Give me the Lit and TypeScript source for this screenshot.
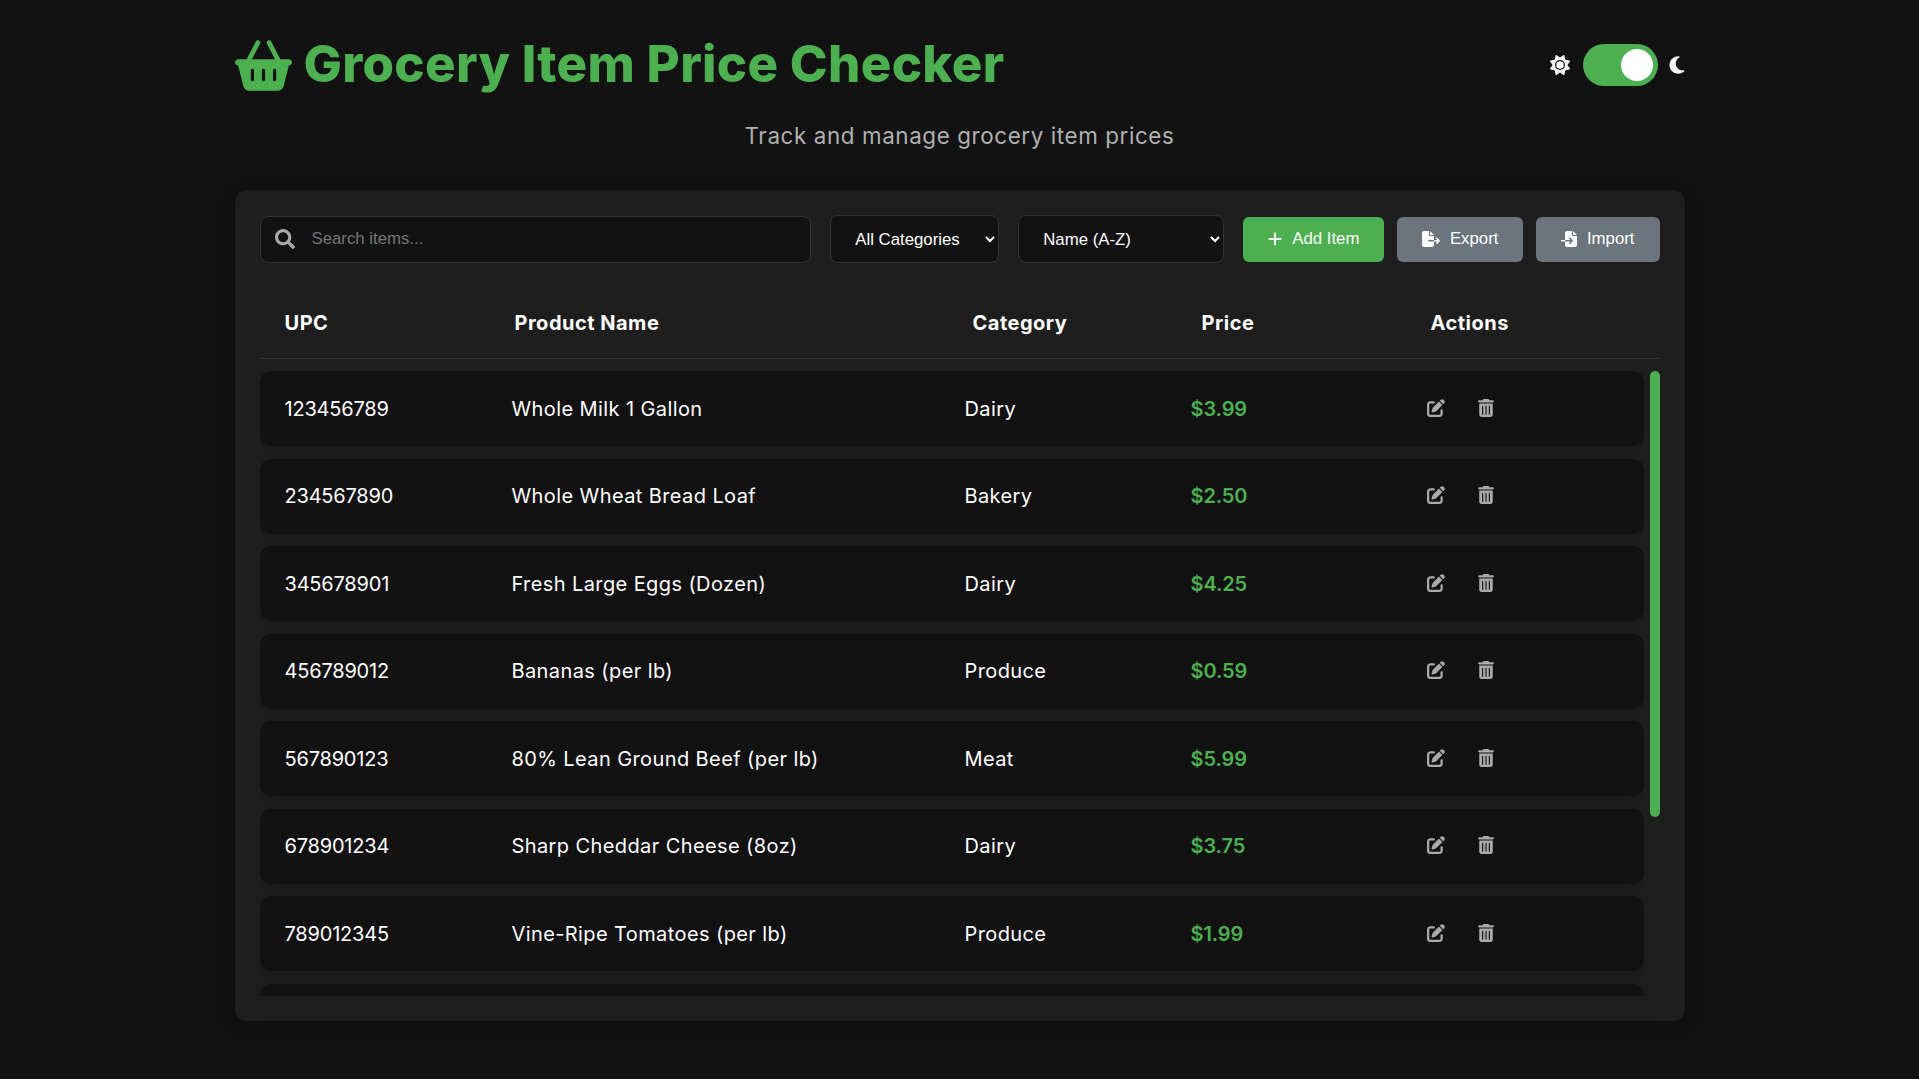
import { LitElement, html, css, svg } from "lit";
import { customElement } from "lit/decorators.js";

const icon = (vb: string, d: string, cls: string) =>
  html`<svg class=${cls} viewBox=${vb} fill="currentColor" aria-hidden="true">${svg`<path d=${d}></path>`}</svg>`;

const P = {
  basket: "M253.3 35.1c6.1-11.8 1.5-26.3-10.2-32.4s-26.3-1.5-32.4 10.2L117.6 192H32c-17.7 0-32 14.3-32 32s14.3 32 32 32L83.9 463.5C91 492 116.6 512 146 512H430c29.4 0 55-20 62.1-48.5L544 256c17.7 0 32-14.3 32-32s-14.3-32-32-32H458.4L365.3 12.9C359.2 1.2 344.7-3.4 332.9 2.7s-16.3 20.6-10.2 32.4L404.3 192H171.7L253.3 35.1zM192 304v96c0 8.8-7.2 16-16 16s-16-7.2-16-16V304c0-8.8 7.2-16 16-16s16 7.2 16 16zm96-16c8.8 0 16 7.2 16 16v96c0 8.8-7.2 16-16 16s-16-7.2-16-16V304c0-8.8 7.2-16 16-16zm128 16v96c0 8.8-7.2 16-16 16s-16-7.2-16-16V304c0-8.8 7.2-16 16-16s16 7.2 16 16z",
  sun: "M361.5 1.2c5 2.1 8.6 6.6 9.6 11.9L391 121l107.9 19.8c5.3 1 9.8 4.6 11.9 9.6s1.5 10.7-1.6 15.2L446.9 256l62.3 90.3c3.1 4.5 3.7 10.2 1.6 15.2s-6.6 8.6-11.9 9.6L391 391 371.1 498.9c-1 5.3-4.6 9.8-9.6 11.9s-10.7 1.5-15.2-1.6L256 446.9l-90.3 62.3c-4.5 3.1-10.2 3.7-15.2 1.6s-8.6-6.6-9.6-11.9L121 391 13.1 371.1c-5.3-1-9.8-4.6-11.9-9.6s-1.5-10.7 1.6-15.2L65.1 256 2.8 165.7c-3.1-4.5-3.7-10.2-1.6-15.2s6.6-8.6 11.9-9.6L121 121 140.9 13.1c1-5.3 4.6-9.8 9.6-11.9s10.7-1.5 15.2 1.6L256 65.1 346.3 2.8c4.5-3.1 10.2-3.7 15.2-1.6zM160 256a96 96 0 1 1 192 0 96 96 0 1 1 -192 0zm224 0a128 128 0 1 0 -256 0 128 128 0 1 0 256 0z",
  moon: "M223.5 32C100 32 0 132.3 0 256S100 480 223.5 480c60.6 0 115.5-24.2 155.8-63.4c5-4.9 6.3-12.5 3.1-18.7s-10.1-9.7-17-8.5c-9.8 1.7-19.8 2.6-30.1 2.6c-96.9 0-175.5-78.8-175.5-176c0-65.8 36-123.1 89.3-153.3c6.1-3.5 9.2-10.5 7.7-17.3s-7.3-11.9-14.3-12.5c-6.3-.5-12.6-.8-19-.8z",
  search: "M505 442.7L405.3 343c-4.5-4.5-10.6-7-17-7H372c27.6-35.3 44-79.7 44-128C416 93.1 322.9 0 208 0S0 93.1 0 208s93.1 208 208 208c48.3 0 92.7-16.4 128-44v16.3c0 6.4 2.5 12.5 7 17l99.7 99.7c9.4 9.4 24.6 9.4 33.9 0l28.3-28.3c9.4-9.4 9.4-24.6.1-34zM208 336c-70.7 0-128-57.2-128-128 0-70.7 57.2-128 128-128 70.7 0 128 57.2 128 128 0 70.7-57.2 128-128 128z",
  plus: "M256 80c0-17.7-14.3-32-32-32s-32 14.3-32 32V224H48c-17.7 0-32 14.3-32 32s14.3 32 32 32H192V432c0 17.7 14.3 32 32 32s32-14.3 32-32V288H400c17.7 0 32-14.3 32-32s-14.3-32-32-32H256V80z",
  exp: "M0 64C0 28.7 28.7 0 64 0H224V128c0 17.7 14.3 32 32 32H384V288H216c-13.3 0-24 10.7-24 24s10.7 24 24 24H384V448c0 35.3-28.7 64-64 64H64c-35.3 0-64-28.7-64-64V64zM384 336V288H494.1l-39-39c-9.4-9.4-9.4-24.6 0-33.9s24.6-9.4 33.9 0l80 80c9.4 9.4 9.4 24.6 0 33.9l-80 80c-9.4 9.4-24.6 9.4-33.9 0s-9.4-24.6 0-33.9l39-39H384zm0-208H256V0L384 128z",
  imp: "M128 64c0-35.3 28.7-64 64-64H352V128c0 17.7 14.3 32 32 32H512V448c0 35.3-28.7 64-64 64H192c-35.3 0-64-28.7-64-64V336H302.1l-39 39c-9.4 9.4-9.4 24.6 0 33.9s24.6 9.4 33.9 0l80-80c9.4-9.4 9.4-24.6 0-33.9l-80-80c-9.4-9.4-24.6-9.4-33.9 0s-9.4 24.6 0 33.9l39 39H128V64zm0 224v48H24c-13.3 0-24-10.7-24-24s10.7-24 24-24H128zM512 128H384V0L512 128z",
  edit: "M471.6 21.7c-21.9-21.9-57.3-21.9-79.2 0L362.3 51.7l97.9 97.9 30.1-30.1c21.9-21.9 21.9-57.3 0-79.2L471.6 21.7zm-299.2 220c-6.1 6.1-10.8 13.6-13.5 21.9l-29.6 88.8c-2.9 8.6-.6 18.1 5.8 24.6s15.9 8.7 24.6 5.8l88.8-29.6c8.2-2.7 15.7-7.4 21.9-13.5L437.7 172.3 339.7 74.3 172.4 241.7zM96 64C43 64 0 107 0 160V416c0 53 43 96 96 96H352c53 0 96-43 96-96V320c0-17.7-14.3-32-32-32s-32 14.3-32 32v96c0 17.7-14.3 32-32 32H96c-17.7 0-32-14.3-32-32V160c0-17.7 14.3-32 32-32h96c17.7 0 32-14.3 32-32s-14.3-32-32-32H96z",
  trash: "M135.2 17.7C140.6 6.8 151.7 0 163.8 0H284.2c12.1 0 23.2 6.8 28.6 17.7L320 32h96c17.7 0 32 14.3 32 32s-14.3 32-32 32H32C14.3 96 0 81.7 0 64S14.3 32 32 32h96l7.2-14.3zM32 128H416V448c0 35.3-28.7 64-64 64H96c-35.3 0-64-28.7-64-64V128zm96 64c-8.8 0-16 7.2-16 16V432c0 8.8 7.2 16 16 16s16-7.2 16-16V208c0-8.8-7.2-16-16-16zm96 0c-8.8 0-16 7.2-16 16V432c0 8.8 7.2 16 16 16s16-7.2 16-16V208c0-8.8-7.2-16-16-16zm96 0c-8.8 0-16 7.2-16 16V432c0 8.8 7.2 16 16 16s16-7.2 16-16V208c0-8.8-7.2-16-16-16z",
};

const ITEMS = [
  ["123456789", "Whole Milk 1 Gallon", "Dairy", "$3.99"],
  ["234567890", "Whole Wheat Bread Loaf", "Bakery", "$2.50"],
  ["345678901", "Fresh Large Eggs (Dozen)", "Dairy", "$4.25"],
  ["456789012", "Bananas (per lb)", "Produce", "$0.59"],
  ["567890123", "80% Lean Ground Beef (per lb)", "Meat", "$5.99"],
  ["678901234", "Sharp Cheddar Cheese (8oz)", "Dairy", "$3.75"],
  ["789012345", "Vine-Ripe Tomatoes (per lb)", "Produce", "$1.99"],
];

@customElement("app-root")
export class AppRoot extends LitElement {
  static styles = css`
    :host { display: block; }
    * { box-sizing: border-box; }
    .page {
      min-height: 1079px;
      background: #121212;
      color: #fff;
      font-family: Inter, "Noto Sans", sans-serif;
    }
    .wrap { width: 1450px; margin: 0 auto; padding-top: 30px; }
    .top { display: flex; align-items: center; justify-content: space-between; height: 68px; }
    .brand { display: flex; align-items: center; gap: 12px; color: #4caf50; }
    .brand svg { width: 57px; height: 51px; margin-top: 2px; }
    h1 { margin: 0; font-size: 51px; font-weight: 800; letter-spacing: 0.3px; line-height: 68px; }
    .theme { display: flex; align-items: center; gap: 13px; margin: 2px -1px 0 0; }
    .theme svg { display: block; color: #f5f5f5; }
    .sun { width: 20px; height: 20px; }
    .moon { width: 18px; height: 20px; margin-left: -3px; }
    .toggle {
      width: 75px; height: 42px; padding: 5px; border-radius: 21px;
      background: #4caf50; display: flex; justify-content: flex-end;
    }
    .knob { width: 32px; height: 32px; border-radius: 50%; background: #fff; }
    .sub {
      margin: 22px 0 0; text-align: center; color: #b0b0b0;
      font-size: 22.4px; line-height: 32px; letter-spacing: 0.6px;
    }
    .card {
      margin-top: 38px; height: 831px; padding: 25px;
      background: #1e1e1e; border-radius: 12px;
      box-shadow: 0 4px 20px rgba(0,0,0,.3);
    }
    .toolbar { display: flex; align-items: center; gap: 19px; height: 48px; }
    .search {
      flex: 1; height: 47px; display: flex; align-items: center; gap: 15px;
      padding: 0 14px; background: #121212; border: 1px solid #333; border-radius: 8px;
    }
    .search svg { width: 20px; height: 20px; color: #aaa; flex: none; }
    .search input {
      flex: 1; border: 0; outline: 0; background: transparent; color: #fff;
      font: 16.8px "Liberation Sans", Arial, sans-serif;
    }
    .search input::placeholder { color: #757575; opacity: 1; }
    select {
      height: 48px; padding: 0 0 0 20px; background: #121212; color: #fff;
      border: 1px solid #333; border-radius: 8px;
      font: 16.8px "Liberation Sans", Arial, sans-serif;
    }
    .cat { width: 169px; }
    .sort { width: 206px; }
    .btns { display: flex; gap: 12.5px; }
    .btn {
      height: 45px; padding: 0 25px; border: 0; border-radius: 6px; color: #fff;
      display: flex; align-items: center; gap: 10px;
      font: 16.8px "Liberation Sans", Arial, sans-serif;
    }
    .green { background: #4caf50; }
    .gray { background: #6c757d; }
    .btn svg { height: 16px; display: block; }
    .i-plus { width: 14px; }
    .i-exp { width: 18px; }
    .i-imp { width: 16px; }
    .head {
      display: grid; grid-template-columns: 230px 458px 229px 229px 1fr;
      align-items: center; height: 71px; margin-top: 25px; padding: 0 25px;
      border-bottom: 1px solid #333; font-size: 20px; font-weight: 700; letter-spacing: 0.5px;
    }
    .body { display: flex; justify-content: space-between; height: 625px; margin-top: 12px; }
    .rows { width: 1384px; overflow: hidden; padding: 0; }
    .row {
      display: grid; grid-template-columns: 227px 453px 226px 236px 1fr;
      align-items: center; height: 75px; margin-bottom: 12.5px; padding: 0 25px;
      background: #121212; border-radius: 12px; font-size: 20px; letter-spacing: 0.4px;
      box-shadow: 0 2px 8px rgba(0,0,0,.2);
    }
    .upc { letter-spacing: -0.2px; }
    .price { color: #4caf50; font-weight: 600; letter-spacing: -0.1px; }
    .actions { display: flex; align-items: center; gap: 33px; color: #aaa; }
    .actions svg { display: block; height: 18px; margin-top: -2px; }
    .i-edit { width: 18px; }
    .i-trash { width: 16px; }
    .thumb { width: 10px; height: 446px; border-radius: 5px; background: #4caf50; }
  `;

  render() {
    return html`<div class="page"><div class="wrap">
      <header class="top">
        <div class="brand">
          ${icon("0 0 576 512", P.basket, "")}
          <h1>Grocery Item Price Checker</h1>
        </div>
        <div class="theme">
          ${icon("0 0 512 512", P.sun, "sun")}
          <div class="toggle"><div class="knob"></div></div>
          ${icon("0 0 384 512", P.moon, "moon")}
        </div>
      </header>
      <p class="sub">Track and manage grocery item prices</p>
      <main class="card">
        <div class="toolbar">
          <label class="search">
            ${icon("0 0 512 512", P.search, "")}
            <input placeholder="Search items..." />
          </label>
          <select class="cat">
            <option>All Categories</option><option>Dairy</option><option>Bakery</option>
            <option>Produce</option><option>Meat</option>
          </select>
          <select class="sort">
            <option>Name (A-Z)</option><option>Name (Z-A)</option>
          </select>
          <div class="btns">
            <button class="btn green">${icon("0 0 448 512", P.plus, "i-plus")}Add Item</button>
            <button class="btn gray">${icon("0 0 576 512", P.exp, "i-exp")}Export</button>
            <button class="btn gray">${icon("0 0 512 512", P.imp, "i-imp")}Import</button>
          </div>
        </div>
        <div class="head">
          <div>UPC</div><div>Product Name</div><div>Category</div><div>Price</div><div>Actions</div>
        </div>
        <div class="body">
          <div class="rows">
            ${ITEMS.map(([u, n, c, p]) => html`<div class="row">
              <div class="upc">${u}</div><div>${n}</div><div>${c}</div><div class="price">${p}</div>
              <div class="actions">
                ${icon("0 0 512 512", P.edit, "i-edit")}
                ${icon("0 0 448 512", P.trash, "i-trash")}
              </div>
            </div>`)}
            <div class="row"></div>
          </div>
          <div class="thumb"></div>
        </div>
      </main>
    </div></div>`;
  }
}
